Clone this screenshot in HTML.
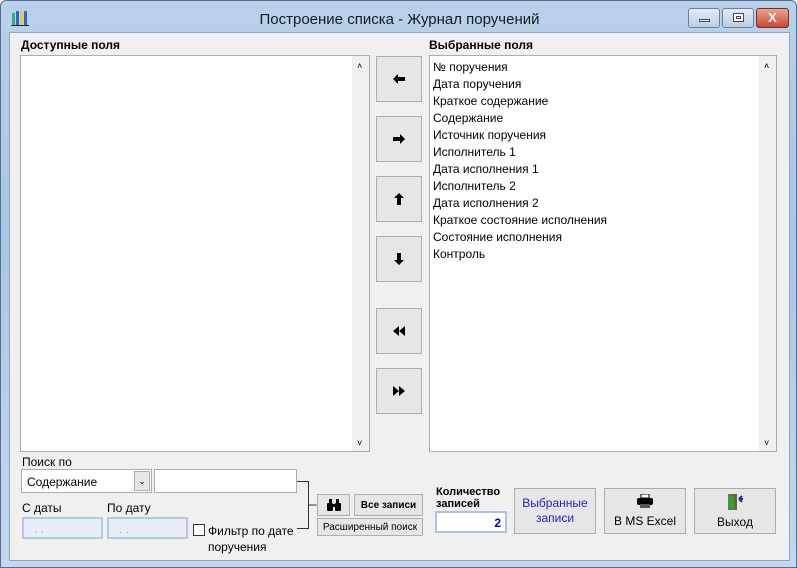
<!DOCTYPE html>
<html><head><meta charset="utf-8"><style>
*{box-sizing:border-box}
body{margin:0;width:797px;height:568px;overflow:hidden;font-family:"Liberation Sans",sans-serif;font-size:12px;background:#fff}
.win{position:absolute;left:0;top:0;width:797px;height:568px;background:linear-gradient(#b9d1ea,#a9c6e6 40%,#c3d8ef);border:1px solid #5a6f87;border-radius:6px 6px 0 0}
.title{position:absolute;left:0;top:10px;width:797px;text-align:center;font-size:15px;color:#1a1a1a}
.client{position:absolute;left:8px;top:31px;width:781px;height:529px;background:#f0f0f0;border:1px solid #8ea6c2}
.a{position:absolute}
.lbl{font-weight:bold;color:#000}
.list{background:#fff;border:1px solid #abadb3}
.sb{position:absolute;right:0;top:0;bottom:0;width:17px;background:#f0f0f0}
.btn{position:absolute;background:#e6e6e6;border:1px solid #adadad;display:flex;align-items:center;justify-content:center;text-align:center}
.it{height:17px;line-height:17px;font-size:12px}
.cap{position:absolute;top:7px;height:20px;border:1px solid #6d7f96;border-radius:3px;background:linear-gradient(#e3ecf7,#bccee5);}
</style></head><body>
<div class="win">
<svg class="a" style="left:10px;top:8px" width="18" height="18"><rect x="1" y="4" width="3" height="12" fill="#3a8"/><rect x="5" y="2" width="3" height="14" fill="#36c"/><rect x="9" y="3" width="3" height="13" fill="#ec3"/><rect x="13" y="2" width="3" height="14" fill="#36c"/><path d="M0 16.5h18" stroke="#222"/></svg>
<div class="title">Построение списка - Журнал поручений</div>
<div class="cap" style="left:687px;width:32px"><div class="a" style="left:10px;top:10px;width:11px;height:3px;background:#fff;border:1px solid #445"></div></div>
<div class="cap" style="left:721px;width:32px"><div class="a" style="left:10px;top:4px;width:11px;height:9px;border:1px solid #445;background:#fff"><div style="margin:2px;height:3px;border:1px solid #445"></div></div></div>
<div class="cap" style="left:755px;width:33px;background:linear-gradient(#e8a393,#c74a35);border-color:#7a2a1f;color:#fff;font-weight:bold;text-align:center;line-height:18px;font-size:13px">X</div>
<div class="client"></div>
</div>
<div class="a lbl" style="left:21px;top:38px">Доступные поля</div>
<div class="a lbl" style="left:429px;top:38px">Выбранные поля</div>
<div class="a list" style="left:20px;top:55px;width:350px;height:397px"><div class="sb"><div class="a" style="left:5px;top:5px;font-size:9px">˄</div><div class="a" style="left:5px;bottom:3px;font-size:9px">˅</div></div></div>
<div class="a list" style="left:429px;top:55px;width:348px;height:397px;padding:3px 0 0 3px">
<div class="it">№ поручения</div><div class="it">Дата поручения</div><div class="it">Краткое содержание</div><div class="it">Содержание</div><div class="it">Источник поручения</div><div class="it">Исполнитель 1</div><div class="it">Дата исполнения 1</div><div class="it">Исполнитель 2</div><div class="it">Дата исполнения 2</div><div class="it">Краткое состояние исполнения</div><div class="it">Состояние исполнения</div><div class="it">Контроль</div>
<div class="sb"><div class="a" style="left:5px;top:5px;font-size:9px">˄</div><div class="a" style="left:5px;bottom:3px;font-size:9px">˅</div></div></div>
<div class="btn" style="left:376px;top:56px;width:46px;height:46px"><svg width="12" height="10"><path d="M0 5l5-5v3h7v4h-7v3z"/></svg></div>
<div class="btn" style="left:376px;top:116px;width:46px;height:46px"><svg width="12" height="10"><path d="M12 5l-5-5v3h-7v4h7v3z"/></svg></div>
<div class="btn" style="left:376px;top:176px;width:46px;height:46px"><svg width="10" height="12"><path d="M5 0l-5 5h3v7h4v-7h3z"/></svg></div>
<div class="btn" style="left:376px;top:236px;width:46px;height:46px"><svg width="10" height="12"><path d="M5 12l-5-5h3v-7h4v7h3z"/></svg></div>
<div class="btn" style="left:376px;top:308px;width:46px;height:46px"><svg width="12" height="10"><path d="M0 5l6-5v10zM6 5l6-5v10z"/></svg></div>
<div class="btn" style="left:376px;top:368px;width:46px;height:46px"><svg width="12" height="10"><path d="M12 5l-6-5v10zM6 5l-6-5v10z"/></svg></div>
<div class="a" style="left:22px;top:455px">Поиск по</div>
<div class="a" style="left:21px;top:469px;width:131px;height:24px;background:#fff;border:1px solid #abadb3;padding:5px 0 0 5px">Содержание<div class="a" style="right:1px;top:1px;width:16px;height:20px;background:#e6e6e6;border:1px solid #adadad;font-size:9px;text-align:center;line-height:18px">⌄</div></div>
<div class="a" style="left:154px;top:469px;width:143px;height:24px;background:#fff;border:1px solid #abadb3"></div>
<svg class="a" style="left:297px;top:480px" width="20" height="60"><path d="M0 1.5h11.5v47H0M11.5 25h8" stroke="#333" fill="none"/></svg>
<div class="a" style="left:22px;top:501px">С даты</div>
<div class="a" style="left:107px;top:501px">По дату</div>
<div class="a" style="left:22px;top:517px;width:81px;height:22px;background:#e8eef5;border:2px solid #b5c8de;color:#aaa;padding:3px 10px">. .</div>
<div class="a" style="left:107px;top:517px;width:81px;height:22px;background:#e8eef5;border:2px solid #b5c8de;color:#aaa;padding:3px 10px">. .</div>
<div class="a" style="left:193px;top:524px;width:12px;height:12px;background:#fff;border:1px solid #333"></div>
<div class="a" style="left:208px;top:523px;line-height:16px">Фильтр по дате<br>поручения</div>
<div class="btn" style="left:317px;top:494px;width:33px;height:22px"><svg width="16" height="12"><rect x="1" y="4" width="6" height="8" rx="1"/><rect x="9" y="4" width="6" height="8" rx="1"/><rect x="3" y="0" width="3" height="5"/><rect x="10" y="0" width="3" height="5"/><rect x="6" y="5" width="4" height="3"/></svg></div>
<div class="btn" style="left:354px;top:494px;width:69px;height:22px;font-size:10px;font-weight:bold">Все записи</div>
<div class="btn" style="left:317px;top:518px;width:106px;height:18px;font-size:10px">Расширенный поиск</div>
<div class="a lbl" style="left:436px;top:486px;font-size:11px;line-height:12px">Количество<br>записей</div>
<div class="a" style="left:435px;top:511px;width:72px;height:22px;background:#fff;border:2px solid #a7c4e8;text-align:right;padding:3px 4px;color:#00c;font-weight:bold">2</div>
<div class="btn" style="left:514px;top:488px;width:82px;height:46px;color:#2020e0;line-height:15px">Выбранные<br>записи</div>
<div class="btn" style="left:604px;top:488px;width:82px;height:46px;flex-direction:column"><svg width="18" height="14"><path d="M5 0h8v4H5z" fill="#fff" stroke="#000"/><rect x="1" y="4" width="16" height="7" rx="2"/><rect x="4" y="10" width="10" height="4" fill="#555"/></svg><span style="margin-top:6px">В MS Excel</span></div>
<div class="btn" style="left:694px;top:488px;width:82px;height:46px;flex-direction:column"><svg width="18" height="18"><rect x="2" y="1" width="9" height="16" fill="#6a6a2a"/><path d="M2 1l6 3v13l-6-1z" fill="#3b9a3b"/><path d="M17 6h-4M13 6l3-3M13 6l3 3" stroke="#1633a8" stroke-width="2"/></svg><span style="margin-top:4px">Выход</span></div>
</body></html>
